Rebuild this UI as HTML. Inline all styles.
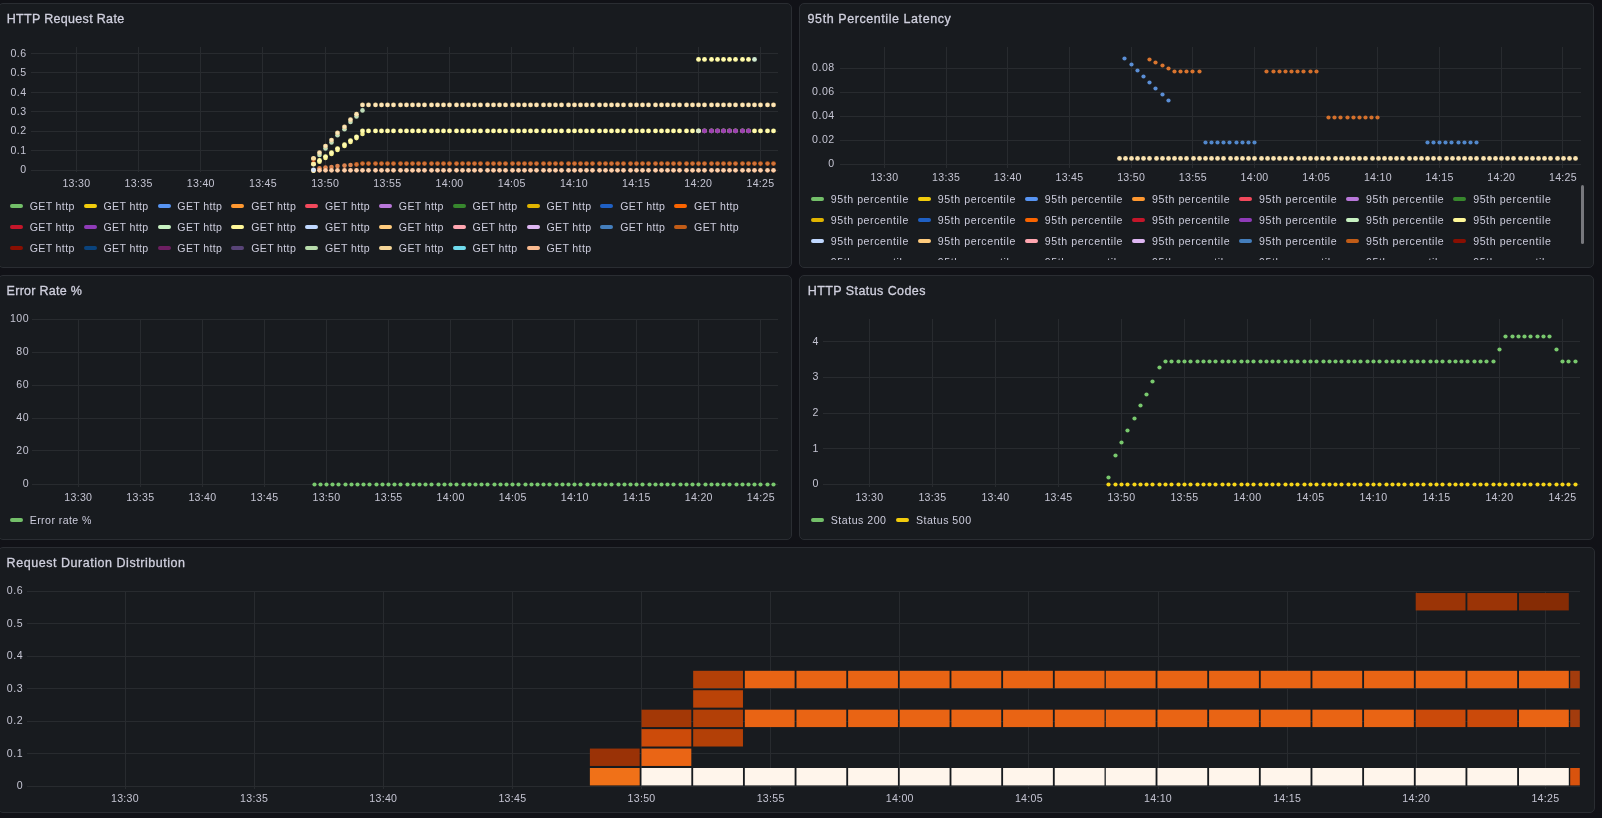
<!DOCTYPE html>
<html lang="en"><head><meta charset="utf-8"><title>Dashboard</title>
<style>
html,body{margin:0;padding:0;background:#111217;}
body{width:1602px;height:818px;overflow:hidden;position:relative;font-family:"Liberation Sans",sans-serif;color:#ccccdc;}
.panel{position:absolute;box-sizing:border-box;background:#181b1f;border:1px solid #2a2d32;border-radius:5px;}
.title{position:absolute;font-size:12.5px;line-height:20px;font-weight:400;color:#d0d0de;white-space:nowrap;letter-spacing:0;-webkit-text-stroke:0.3px #d0d0de;}
svg{position:absolute;left:0;top:0;}
#root{position:absolute;left:0;top:0;width:1602px;height:818px;will-change:transform;}
.ax{font-family:"Liberation Sans",sans-serif;font-size:10.6px;fill:#c4c4d2;letter-spacing:0.3px;}
.ay{letter-spacing:0.5px;}
.lg{position:absolute;font-size:10.6px;line-height:16px;white-space:nowrap;color:#ccccdc;}
.lg i{position:absolute;left:-19.8px;top:6.4px;width:13px;height:3.8px;border-radius:1.9px;display:block;}
.clip{position:absolute;overflow:hidden;}
</style></head><body>
<div id="root">

<div class="panel" style="left:-2px;top:3px;width:794px;height:265px"></div>
<div class="panel" style="left:799px;top:3px;width:795px;height:265px"></div>
<div class="panel" style="left:-2px;top:275px;width:794px;height:265px"></div>
<div class="panel" style="left:799px;top:275px;width:795px;height:265px"></div>
<div class="panel" style="left:-2px;top:547px;width:1597px;height:266px"></div>
<svg width="1602" height="818" viewBox="0 0 1602 818">
<path d="M76.5 47V172M138.5 47V172M200.5 47V172M262.5 47V172M325.5 47V172M387.5 47V172M449.5 47V172M511.5 47V172M573.5 47V172M636.5 47V172M698.5 47V172M760.5 47V172M31 53.5H777.5M31 72.5H777.5M31 92.5H777.5M31 111.5H777.5M31 131.5H777.5M31 150.5H777.5M31 170.5H777.5" stroke="#f0faff" stroke-opacity="0.075" stroke-width="1" fill="none" shape-rendering="crispEdges"/>
<text class="ax ay" x="26.7" y="173.3" text-anchor="end">0</text>
<text class="ax ay" x="26.7" y="153.85" text-anchor="end">0.1</text>
<text class="ax ay" x="26.7" y="134.4" text-anchor="end">0.2</text>
<text class="ax ay" x="26.7" y="114.95" text-anchor="end">0.3</text>
<text class="ax ay" x="26.7" y="95.5" text-anchor="end">0.4</text>
<text class="ax ay" x="26.7" y="76.05" text-anchor="end">0.5</text>
<text class="ax ay" x="26.7" y="56.6" text-anchor="end">0.6</text>
<text class="ax" x="76.4" y="187" text-anchor="middle">13:30</text>
<text class="ax" x="138.59" y="187" text-anchor="middle">13:35</text>
<text class="ax" x="200.78" y="187" text-anchor="middle">13:40</text>
<text class="ax" x="262.97" y="187" text-anchor="middle">13:45</text>
<text class="ax" x="325.16" y="187" text-anchor="middle">13:50</text>
<text class="ax" x="387.35" y="187" text-anchor="middle">13:55</text>
<text class="ax" x="449.54" y="187" text-anchor="middle">14:00</text>
<text class="ax" x="511.73" y="187" text-anchor="middle">14:05</text>
<text class="ax" x="573.92" y="187" text-anchor="middle">14:10</text>
<text class="ax" x="636.11" y="187" text-anchor="middle">14:15</text>
<text class="ax" x="698.3" y="187" text-anchor="middle">14:20</text>
<text class="ax" x="760.49" y="187" text-anchor="middle">14:25</text>
<g fill="#dd8450">
<circle cx="319.5" cy="168.3" r="2.3"/><circle cx="325.5" cy="167.6" r="2.3"/><circle cx="331.5" cy="167" r="2.3"/><circle cx="337.5" cy="166.1" r="2.3"/><circle cx="344.5" cy="165.6" r="2.3"/><circle cx="350.5" cy="165" r="2.3"/>
</g>
<g fill="#C15C17">
<circle cx="356.5" cy="164.5" r="2.4"/><circle cx="362.5" cy="163.6" r="2.4"/><circle cx="368.5" cy="163.6" r="2.4"/><circle cx="375.5" cy="163.6" r="2.4"/><circle cx="381.5" cy="163.6" r="2.4"/><circle cx="387.5" cy="163.6" r="2.4"/><circle cx="393.5" cy="163.6" r="2.4"/><circle cx="400.5" cy="163.6" r="2.4"/><circle cx="406.5" cy="163.6" r="2.4"/><circle cx="412.5" cy="163.6" r="2.4"/><circle cx="418.5" cy="163.6" r="2.4"/><circle cx="424.5" cy="163.6" r="2.4"/><circle cx="431.5" cy="163.6" r="2.4"/><circle cx="437.5" cy="163.6" r="2.4"/><circle cx="443.5" cy="163.6" r="2.4"/><circle cx="449.5" cy="163.6" r="2.4"/><circle cx="456.5" cy="163.6" r="2.4"/><circle cx="462.5" cy="163.6" r="2.4"/><circle cx="468.5" cy="163.6" r="2.4"/><circle cx="474.5" cy="163.6" r="2.4"/><circle cx="480.5" cy="163.6" r="2.4"/><circle cx="487.5" cy="163.6" r="2.4"/><circle cx="493.5" cy="163.6" r="2.4"/><circle cx="499.5" cy="163.6" r="2.4"/><circle cx="505.5" cy="163.6" r="2.4"/><circle cx="512.5" cy="163.6" r="2.4"/><circle cx="518.5" cy="163.6" r="2.4"/><circle cx="524.5" cy="163.6" r="2.4"/><circle cx="530.5" cy="163.6" r="2.4"/><circle cx="536.5" cy="163.6" r="2.4"/><circle cx="543.5" cy="163.6" r="2.4"/><circle cx="549.5" cy="163.6" r="2.4"/><circle cx="555.5" cy="163.6" r="2.4"/><circle cx="561.5" cy="163.6" r="2.4"/><circle cx="568.5" cy="163.6" r="2.4"/><circle cx="574.5" cy="163.6" r="2.4"/><circle cx="580.5" cy="163.6" r="2.4"/><circle cx="586.5" cy="163.6" r="2.4"/><circle cx="592.5" cy="163.6" r="2.4"/><circle cx="599.5" cy="163.6" r="2.4"/><circle cx="605.5" cy="163.6" r="2.4"/><circle cx="611.5" cy="163.6" r="2.4"/><circle cx="617.5" cy="163.6" r="2.4"/><circle cx="623.5" cy="163.6" r="2.4"/><circle cx="630.5" cy="163.6" r="2.4"/><circle cx="636.5" cy="163.6" r="2.4"/><circle cx="642.5" cy="163.6" r="2.4"/><circle cx="648.5" cy="163.6" r="2.4"/><circle cx="655.5" cy="163.6" r="2.4"/><circle cx="661.5" cy="163.6" r="2.4"/><circle cx="667.5" cy="163.6" r="2.4"/><circle cx="673.5" cy="163.6" r="2.4"/><circle cx="679.5" cy="163.6" r="2.4"/><circle cx="686.5" cy="163.6" r="2.4"/><circle cx="692.5" cy="163.6" r="2.4"/><circle cx="698.5" cy="163.6" r="2.4"/><circle cx="704.5" cy="163.6" r="2.4"/><circle cx="711.5" cy="163.6" r="2.4"/><circle cx="717.5" cy="163.6" r="2.4"/><circle cx="723.5" cy="163.6" r="2.4"/><circle cx="729.5" cy="163.6" r="2.4"/><circle cx="735.5" cy="163.6" r="2.4"/><circle cx="742.5" cy="163.6" r="2.4"/><circle cx="748.5" cy="163.6" r="2.4"/><circle cx="754.5" cy="163.6" r="2.4"/><circle cx="760.5" cy="163.6" r="2.4"/><circle cx="767.5" cy="163.6" r="2.4"/><circle cx="773.5" cy="163.6" r="2.4"/>
</g>
<g fill="#cf7440">
<circle cx="356.5" cy="164.5" r="1.7"/><circle cx="362.5" cy="163.6" r="1.7"/><circle cx="368.5" cy="163.6" r="1.7"/><circle cx="375.5" cy="163.6" r="1.7"/><circle cx="381.5" cy="163.6" r="1.7"/><circle cx="387.5" cy="163.6" r="1.7"/><circle cx="393.5" cy="163.6" r="1.7"/><circle cx="400.5" cy="163.6" r="1.7"/><circle cx="406.5" cy="163.6" r="1.7"/><circle cx="412.5" cy="163.6" r="1.7"/><circle cx="418.5" cy="163.6" r="1.7"/><circle cx="424.5" cy="163.6" r="1.7"/><circle cx="431.5" cy="163.6" r="1.7"/><circle cx="437.5" cy="163.6" r="1.7"/><circle cx="443.5" cy="163.6" r="1.7"/><circle cx="449.5" cy="163.6" r="1.7"/><circle cx="456.5" cy="163.6" r="1.7"/><circle cx="462.5" cy="163.6" r="1.7"/><circle cx="468.5" cy="163.6" r="1.7"/><circle cx="474.5" cy="163.6" r="1.7"/><circle cx="480.5" cy="163.6" r="1.7"/><circle cx="487.5" cy="163.6" r="1.7"/><circle cx="493.5" cy="163.6" r="1.7"/><circle cx="499.5" cy="163.6" r="1.7"/><circle cx="505.5" cy="163.6" r="1.7"/><circle cx="512.5" cy="163.6" r="1.7"/><circle cx="518.5" cy="163.6" r="1.7"/><circle cx="524.5" cy="163.6" r="1.7"/><circle cx="530.5" cy="163.6" r="1.7"/><circle cx="536.5" cy="163.6" r="1.7"/><circle cx="543.5" cy="163.6" r="1.7"/><circle cx="549.5" cy="163.6" r="1.7"/><circle cx="555.5" cy="163.6" r="1.7"/><circle cx="561.5" cy="163.6" r="1.7"/><circle cx="568.5" cy="163.6" r="1.7"/><circle cx="574.5" cy="163.6" r="1.7"/><circle cx="580.5" cy="163.6" r="1.7"/><circle cx="586.5" cy="163.6" r="1.7"/><circle cx="592.5" cy="163.6" r="1.7"/><circle cx="599.5" cy="163.6" r="1.7"/><circle cx="605.5" cy="163.6" r="1.7"/><circle cx="611.5" cy="163.6" r="1.7"/><circle cx="617.5" cy="163.6" r="1.7"/><circle cx="623.5" cy="163.6" r="1.7"/><circle cx="630.5" cy="163.6" r="1.7"/><circle cx="636.5" cy="163.6" r="1.7"/><circle cx="642.5" cy="163.6" r="1.7"/><circle cx="648.5" cy="163.6" r="1.7"/><circle cx="655.5" cy="163.6" r="1.7"/><circle cx="661.5" cy="163.6" r="1.7"/><circle cx="667.5" cy="163.6" r="1.7"/><circle cx="673.5" cy="163.6" r="1.7"/><circle cx="679.5" cy="163.6" r="1.7"/><circle cx="686.5" cy="163.6" r="1.7"/><circle cx="692.5" cy="163.6" r="1.7"/><circle cx="698.5" cy="163.6" r="1.7"/><circle cx="704.5" cy="163.6" r="1.7"/><circle cx="711.5" cy="163.6" r="1.7"/><circle cx="717.5" cy="163.6" r="1.7"/><circle cx="723.5" cy="163.6" r="1.7"/><circle cx="729.5" cy="163.6" r="1.7"/><circle cx="735.5" cy="163.6" r="1.7"/><circle cx="742.5" cy="163.6" r="1.7"/><circle cx="748.5" cy="163.6" r="1.7"/><circle cx="754.5" cy="163.6" r="1.7"/><circle cx="760.5" cy="163.6" r="1.7"/><circle cx="767.5" cy="163.6" r="1.7"/><circle cx="773.5" cy="163.6" r="1.7"/>
</g>
<g fill="#bfdcb8">
<circle cx="319.5" cy="155" r="2.3"/><circle cx="325.5" cy="148.4" r="2.3"/><circle cx="331.5" cy="142.4" r="2.3"/><circle cx="337.5" cy="135.2" r="2.3"/><circle cx="344.5" cy="129.2" r="2.3"/><circle cx="350.5" cy="122" r="2.3"/><circle cx="356.5" cy="116.5" r="2.3"/><circle cx="362.5" cy="110.4" r="2.3"/>
</g>
<g fill="#F4D598">
<circle cx="313.5" cy="158.8" r="2.4"/><circle cx="319.5" cy="152.7" r="2.4"/><circle cx="325.5" cy="146.1" r="2.4"/><circle cx="331.5" cy="140.1" r="2.4"/><circle cx="337.5" cy="132.9" r="2.4"/><circle cx="344.5" cy="126.9" r="2.4"/><circle cx="350.5" cy="119.7" r="2.4"/><circle cx="356.5" cy="114.2" r="2.4"/><circle cx="362.5" cy="104.9" r="2.4"/><circle cx="368.5" cy="104.9" r="2.4"/><circle cx="375.5" cy="104.9" r="2.4"/><circle cx="381.5" cy="104.9" r="2.4"/><circle cx="387.5" cy="104.9" r="2.4"/><circle cx="393.5" cy="104.9" r="2.4"/><circle cx="400.5" cy="104.9" r="2.4"/><circle cx="406.5" cy="104.9" r="2.4"/><circle cx="412.5" cy="104.9" r="2.4"/><circle cx="418.5" cy="104.9" r="2.4"/><circle cx="424.5" cy="104.9" r="2.4"/><circle cx="431.5" cy="104.9" r="2.4"/><circle cx="437.5" cy="104.9" r="2.4"/><circle cx="443.5" cy="104.9" r="2.4"/><circle cx="449.5" cy="104.9" r="2.4"/><circle cx="456.5" cy="104.9" r="2.4"/><circle cx="462.5" cy="104.9" r="2.4"/><circle cx="468.5" cy="104.9" r="2.4"/><circle cx="474.5" cy="104.9" r="2.4"/><circle cx="480.5" cy="104.9" r="2.4"/><circle cx="487.5" cy="104.9" r="2.4"/><circle cx="493.5" cy="104.9" r="2.4"/><circle cx="499.5" cy="104.9" r="2.4"/><circle cx="505.5" cy="104.9" r="2.4"/><circle cx="512.5" cy="104.9" r="2.4"/><circle cx="518.5" cy="104.9" r="2.4"/><circle cx="524.5" cy="104.9" r="2.4"/><circle cx="530.5" cy="104.9" r="2.4"/><circle cx="536.5" cy="104.9" r="2.4"/><circle cx="543.5" cy="104.9" r="2.4"/><circle cx="549.5" cy="104.9" r="2.4"/><circle cx="555.5" cy="104.9" r="2.4"/><circle cx="561.5" cy="104.9" r="2.4"/><circle cx="568.5" cy="104.9" r="2.4"/><circle cx="574.5" cy="104.9" r="2.4"/><circle cx="580.5" cy="104.9" r="2.4"/><circle cx="586.5" cy="104.9" r="2.4"/><circle cx="592.5" cy="104.9" r="2.4"/><circle cx="599.5" cy="104.9" r="2.4"/><circle cx="605.5" cy="104.9" r="2.4"/><circle cx="611.5" cy="104.9" r="2.4"/><circle cx="617.5" cy="104.9" r="2.4"/><circle cx="623.5" cy="104.9" r="2.4"/><circle cx="630.5" cy="104.9" r="2.4"/><circle cx="636.5" cy="104.9" r="2.4"/><circle cx="642.5" cy="104.9" r="2.4"/><circle cx="648.5" cy="104.9" r="2.4"/><circle cx="655.5" cy="104.9" r="2.4"/><circle cx="661.5" cy="104.9" r="2.4"/><circle cx="667.5" cy="104.9" r="2.4"/><circle cx="673.5" cy="104.9" r="2.4"/><circle cx="679.5" cy="104.9" r="2.4"/><circle cx="686.5" cy="104.9" r="2.4"/><circle cx="692.5" cy="104.9" r="2.4"/><circle cx="698.5" cy="104.9" r="2.4"/><circle cx="704.5" cy="104.9" r="2.4"/><circle cx="711.5" cy="104.9" r="2.4"/><circle cx="717.5" cy="104.9" r="2.4"/><circle cx="723.5" cy="104.9" r="2.4"/><circle cx="729.5" cy="104.9" r="2.4"/><circle cx="735.5" cy="104.9" r="2.4"/><circle cx="742.5" cy="104.9" r="2.4"/><circle cx="748.5" cy="104.9" r="2.4"/><circle cx="754.5" cy="104.9" r="2.4"/><circle cx="760.5" cy="104.9" r="2.4"/><circle cx="767.5" cy="104.9" r="2.4"/><circle cx="773.5" cy="104.9" r="2.4"/>
</g>
<g fill="#fbe6bc">
<circle cx="313.5" cy="158.8" r="1.7"/><circle cx="319.5" cy="152.7" r="1.7"/><circle cx="325.5" cy="146.1" r="1.7"/><circle cx="331.5" cy="140.1" r="1.7"/><circle cx="337.5" cy="132.9" r="1.7"/><circle cx="344.5" cy="126.9" r="1.7"/><circle cx="350.5" cy="119.7" r="1.7"/><circle cx="356.5" cy="114.2" r="1.7"/><circle cx="362.5" cy="104.9" r="1.7"/><circle cx="368.5" cy="104.9" r="1.7"/><circle cx="375.5" cy="104.9" r="1.7"/><circle cx="381.5" cy="104.9" r="1.7"/><circle cx="387.5" cy="104.9" r="1.7"/><circle cx="393.5" cy="104.9" r="1.7"/><circle cx="400.5" cy="104.9" r="1.7"/><circle cx="406.5" cy="104.9" r="1.7"/><circle cx="412.5" cy="104.9" r="1.7"/><circle cx="418.5" cy="104.9" r="1.7"/><circle cx="424.5" cy="104.9" r="1.7"/><circle cx="431.5" cy="104.9" r="1.7"/><circle cx="437.5" cy="104.9" r="1.7"/><circle cx="443.5" cy="104.9" r="1.7"/><circle cx="449.5" cy="104.9" r="1.7"/><circle cx="456.5" cy="104.9" r="1.7"/><circle cx="462.5" cy="104.9" r="1.7"/><circle cx="468.5" cy="104.9" r="1.7"/><circle cx="474.5" cy="104.9" r="1.7"/><circle cx="480.5" cy="104.9" r="1.7"/><circle cx="487.5" cy="104.9" r="1.7"/><circle cx="493.5" cy="104.9" r="1.7"/><circle cx="499.5" cy="104.9" r="1.7"/><circle cx="505.5" cy="104.9" r="1.7"/><circle cx="512.5" cy="104.9" r="1.7"/><circle cx="518.5" cy="104.9" r="1.7"/><circle cx="524.5" cy="104.9" r="1.7"/><circle cx="530.5" cy="104.9" r="1.7"/><circle cx="536.5" cy="104.9" r="1.7"/><circle cx="543.5" cy="104.9" r="1.7"/><circle cx="549.5" cy="104.9" r="1.7"/><circle cx="555.5" cy="104.9" r="1.7"/><circle cx="561.5" cy="104.9" r="1.7"/><circle cx="568.5" cy="104.9" r="1.7"/><circle cx="574.5" cy="104.9" r="1.7"/><circle cx="580.5" cy="104.9" r="1.7"/><circle cx="586.5" cy="104.9" r="1.7"/><circle cx="592.5" cy="104.9" r="1.7"/><circle cx="599.5" cy="104.9" r="1.7"/><circle cx="605.5" cy="104.9" r="1.7"/><circle cx="611.5" cy="104.9" r="1.7"/><circle cx="617.5" cy="104.9" r="1.7"/><circle cx="623.5" cy="104.9" r="1.7"/><circle cx="630.5" cy="104.9" r="1.7"/><circle cx="636.5" cy="104.9" r="1.7"/><circle cx="642.5" cy="104.9" r="1.7"/><circle cx="648.5" cy="104.9" r="1.7"/><circle cx="655.5" cy="104.9" r="1.7"/><circle cx="661.5" cy="104.9" r="1.7"/><circle cx="667.5" cy="104.9" r="1.7"/><circle cx="673.5" cy="104.9" r="1.7"/><circle cx="679.5" cy="104.9" r="1.7"/><circle cx="686.5" cy="104.9" r="1.7"/><circle cx="692.5" cy="104.9" r="1.7"/><circle cx="698.5" cy="104.9" r="1.7"/><circle cx="704.5" cy="104.9" r="1.7"/><circle cx="711.5" cy="104.9" r="1.7"/><circle cx="717.5" cy="104.9" r="1.7"/><circle cx="723.5" cy="104.9" r="1.7"/><circle cx="729.5" cy="104.9" r="1.7"/><circle cx="735.5" cy="104.9" r="1.7"/><circle cx="742.5" cy="104.9" r="1.7"/><circle cx="748.5" cy="104.9" r="1.7"/><circle cx="754.5" cy="104.9" r="1.7"/><circle cx="760.5" cy="104.9" r="1.7"/><circle cx="767.5" cy="104.9" r="1.7"/><circle cx="773.5" cy="104.9" r="1.7"/>
</g>
<g fill="#f4ee92">
<circle cx="319.5" cy="161.7" r="2.3"/><circle cx="325.5" cy="157.9" r="2.3"/><circle cx="331.5" cy="154" r="2.3"/><circle cx="337.5" cy="149.9" r="2.3"/><circle cx="344.5" cy="146" r="2.3"/><circle cx="350.5" cy="141.9" r="2.3"/><circle cx="356.5" cy="138.1" r="2.3"/><circle cx="362.5" cy="134" r="2.3"/>
</g>
<g fill="#FFF899">
<circle cx="313.5" cy="163.9" r="2.4"/><circle cx="319.5" cy="160.4" r="2.4"/><circle cx="325.5" cy="156.6" r="2.4"/><circle cx="331.5" cy="152.7" r="2.4"/><circle cx="337.5" cy="148.6" r="2.4"/><circle cx="344.5" cy="144.7" r="2.4"/><circle cx="350.5" cy="140.6" r="2.4"/><circle cx="356.5" cy="136.8" r="2.4"/><circle cx="362.5" cy="130.9" r="2.4"/><circle cx="368.5" cy="130.9" r="2.4"/><circle cx="375.5" cy="130.9" r="2.4"/><circle cx="381.5" cy="130.9" r="2.4"/><circle cx="387.5" cy="130.9" r="2.4"/><circle cx="393.5" cy="130.9" r="2.4"/><circle cx="400.5" cy="130.9" r="2.4"/><circle cx="406.5" cy="130.9" r="2.4"/><circle cx="412.5" cy="130.9" r="2.4"/><circle cx="418.5" cy="130.9" r="2.4"/><circle cx="424.5" cy="130.9" r="2.4"/><circle cx="431.5" cy="130.9" r="2.4"/><circle cx="437.5" cy="130.9" r="2.4"/><circle cx="443.5" cy="130.9" r="2.4"/><circle cx="449.5" cy="130.9" r="2.4"/><circle cx="456.5" cy="130.9" r="2.4"/><circle cx="462.5" cy="130.9" r="2.4"/><circle cx="468.5" cy="130.9" r="2.4"/><circle cx="474.5" cy="130.9" r="2.4"/><circle cx="480.5" cy="130.9" r="2.4"/><circle cx="487.5" cy="130.9" r="2.4"/><circle cx="493.5" cy="130.9" r="2.4"/><circle cx="499.5" cy="130.9" r="2.4"/><circle cx="505.5" cy="130.9" r="2.4"/><circle cx="512.5" cy="130.9" r="2.4"/><circle cx="518.5" cy="130.9" r="2.4"/><circle cx="524.5" cy="130.9" r="2.4"/><circle cx="530.5" cy="130.9" r="2.4"/><circle cx="536.5" cy="130.9" r="2.4"/><circle cx="543.5" cy="130.9" r="2.4"/><circle cx="549.5" cy="130.9" r="2.4"/><circle cx="555.5" cy="130.9" r="2.4"/><circle cx="561.5" cy="130.9" r="2.4"/><circle cx="568.5" cy="130.9" r="2.4"/><circle cx="574.5" cy="130.9" r="2.4"/><circle cx="580.5" cy="130.9" r="2.4"/><circle cx="586.5" cy="130.9" r="2.4"/><circle cx="592.5" cy="130.9" r="2.4"/><circle cx="599.5" cy="130.9" r="2.4"/><circle cx="605.5" cy="130.9" r="2.4"/><circle cx="611.5" cy="130.9" r="2.4"/><circle cx="617.5" cy="130.9" r="2.4"/><circle cx="623.5" cy="130.9" r="2.4"/><circle cx="630.5" cy="130.9" r="2.4"/><circle cx="636.5" cy="130.9" r="2.4"/><circle cx="642.5" cy="130.9" r="2.4"/><circle cx="648.5" cy="130.9" r="2.4"/><circle cx="655.5" cy="130.9" r="2.4"/><circle cx="661.5" cy="130.9" r="2.4"/><circle cx="667.5" cy="130.9" r="2.4"/><circle cx="673.5" cy="130.9" r="2.4"/><circle cx="679.5" cy="130.9" r="2.4"/><circle cx="686.5" cy="130.9" r="2.4"/><circle cx="692.5" cy="130.9" r="2.4"/><circle cx="698.5" cy="130.9" r="2.4"/><circle cx="704.5" cy="130.9" r="2.4"/><circle cx="711.5" cy="130.9" r="2.4"/><circle cx="717.5" cy="130.9" r="2.4"/><circle cx="723.5" cy="130.9" r="2.4"/><circle cx="729.5" cy="130.9" r="2.4"/><circle cx="735.5" cy="130.9" r="2.4"/><circle cx="742.5" cy="130.9" r="2.4"/><circle cx="748.5" cy="130.9" r="2.4"/><circle cx="754.5" cy="130.9" r="2.4"/><circle cx="760.5" cy="130.9" r="2.4"/><circle cx="767.5" cy="130.9" r="2.4"/><circle cx="773.5" cy="130.9" r="2.4"/>
</g>
<g fill="#fffbb4">
<circle cx="313.5" cy="163.9" r="1.7"/><circle cx="319.5" cy="160.4" r="1.7"/><circle cx="325.5" cy="156.6" r="1.7"/><circle cx="331.5" cy="152.7" r="1.7"/><circle cx="337.5" cy="148.6" r="1.7"/><circle cx="344.5" cy="144.7" r="1.7"/><circle cx="350.5" cy="140.6" r="1.7"/><circle cx="356.5" cy="136.8" r="1.7"/><circle cx="362.5" cy="130.9" r="1.7"/><circle cx="368.5" cy="130.9" r="1.7"/><circle cx="375.5" cy="130.9" r="1.7"/><circle cx="381.5" cy="130.9" r="1.7"/><circle cx="387.5" cy="130.9" r="1.7"/><circle cx="393.5" cy="130.9" r="1.7"/><circle cx="400.5" cy="130.9" r="1.7"/><circle cx="406.5" cy="130.9" r="1.7"/><circle cx="412.5" cy="130.9" r="1.7"/><circle cx="418.5" cy="130.9" r="1.7"/><circle cx="424.5" cy="130.9" r="1.7"/><circle cx="431.5" cy="130.9" r="1.7"/><circle cx="437.5" cy="130.9" r="1.7"/><circle cx="443.5" cy="130.9" r="1.7"/><circle cx="449.5" cy="130.9" r="1.7"/><circle cx="456.5" cy="130.9" r="1.7"/><circle cx="462.5" cy="130.9" r="1.7"/><circle cx="468.5" cy="130.9" r="1.7"/><circle cx="474.5" cy="130.9" r="1.7"/><circle cx="480.5" cy="130.9" r="1.7"/><circle cx="487.5" cy="130.9" r="1.7"/><circle cx="493.5" cy="130.9" r="1.7"/><circle cx="499.5" cy="130.9" r="1.7"/><circle cx="505.5" cy="130.9" r="1.7"/><circle cx="512.5" cy="130.9" r="1.7"/><circle cx="518.5" cy="130.9" r="1.7"/><circle cx="524.5" cy="130.9" r="1.7"/><circle cx="530.5" cy="130.9" r="1.7"/><circle cx="536.5" cy="130.9" r="1.7"/><circle cx="543.5" cy="130.9" r="1.7"/><circle cx="549.5" cy="130.9" r="1.7"/><circle cx="555.5" cy="130.9" r="1.7"/><circle cx="561.5" cy="130.9" r="1.7"/><circle cx="568.5" cy="130.9" r="1.7"/><circle cx="574.5" cy="130.9" r="1.7"/><circle cx="580.5" cy="130.9" r="1.7"/><circle cx="586.5" cy="130.9" r="1.7"/><circle cx="592.5" cy="130.9" r="1.7"/><circle cx="599.5" cy="130.9" r="1.7"/><circle cx="605.5" cy="130.9" r="1.7"/><circle cx="611.5" cy="130.9" r="1.7"/><circle cx="617.5" cy="130.9" r="1.7"/><circle cx="623.5" cy="130.9" r="1.7"/><circle cx="630.5" cy="130.9" r="1.7"/><circle cx="636.5" cy="130.9" r="1.7"/><circle cx="642.5" cy="130.9" r="1.7"/><circle cx="648.5" cy="130.9" r="1.7"/><circle cx="655.5" cy="130.9" r="1.7"/><circle cx="661.5" cy="130.9" r="1.7"/><circle cx="667.5" cy="130.9" r="1.7"/><circle cx="673.5" cy="130.9" r="1.7"/><circle cx="679.5" cy="130.9" r="1.7"/><circle cx="686.5" cy="130.9" r="1.7"/><circle cx="692.5" cy="130.9" r="1.7"/><circle cx="698.5" cy="130.9" r="1.7"/><circle cx="704.5" cy="130.9" r="1.7"/><circle cx="711.5" cy="130.9" r="1.7"/><circle cx="717.5" cy="130.9" r="1.7"/><circle cx="723.5" cy="130.9" r="1.7"/><circle cx="729.5" cy="130.9" r="1.7"/><circle cx="735.5" cy="130.9" r="1.7"/><circle cx="742.5" cy="130.9" r="1.7"/><circle cx="748.5" cy="130.9" r="1.7"/><circle cx="754.5" cy="130.9" r="1.7"/><circle cx="760.5" cy="130.9" r="1.7"/><circle cx="767.5" cy="130.9" r="1.7"/><circle cx="773.5" cy="130.9" r="1.7"/>
</g>
<g fill="#8F3BB8">
<circle cx="704.5" cy="130.9" r="2.4"/><circle cx="711.5" cy="130.9" r="2.4"/><circle cx="717.5" cy="130.9" r="2.4"/><circle cx="723.5" cy="130.9" r="2.4"/><circle cx="729.5" cy="130.9" r="2.4"/><circle cx="735.5" cy="130.9" r="2.4"/><circle cx="742.5" cy="130.9" r="2.4"/><circle cx="748.5" cy="130.9" r="2.4"/>
</g>
<g fill="#a040b0">
<circle cx="704.5" cy="130.9" r="1.7"/><circle cx="711.5" cy="130.9" r="1.7"/><circle cx="717.5" cy="130.9" r="1.7"/><circle cx="723.5" cy="130.9" r="1.7"/><circle cx="729.5" cy="130.9" r="1.7"/><circle cx="735.5" cy="130.9" r="1.7"/><circle cx="742.5" cy="130.9" r="1.7"/><circle cx="748.5" cy="130.9" r="1.7"/>
</g>
<g fill="#d8e8c8">
<circle cx="698.5" cy="130.9" r="2.4"/>
</g>
<g fill="#F9BA8F">
<circle cx="313.5" cy="170.3" r="2.4"/><circle cx="319.5" cy="170.3" r="2.4"/><circle cx="325.5" cy="170.3" r="2.4"/><circle cx="331.5" cy="170.3" r="2.4"/><circle cx="337.5" cy="170.3" r="2.4"/><circle cx="344.5" cy="170.3" r="2.4"/><circle cx="350.5" cy="170.3" r="2.4"/><circle cx="356.5" cy="170.3" r="2.4"/><circle cx="362.5" cy="170.3" r="2.4"/><circle cx="368.5" cy="170.3" r="2.4"/><circle cx="375.5" cy="170.3" r="2.4"/><circle cx="381.5" cy="170.3" r="2.4"/><circle cx="387.5" cy="170.3" r="2.4"/><circle cx="393.5" cy="170.3" r="2.4"/><circle cx="400.5" cy="170.3" r="2.4"/><circle cx="406.5" cy="170.3" r="2.4"/><circle cx="412.5" cy="170.3" r="2.4"/><circle cx="418.5" cy="170.3" r="2.4"/><circle cx="424.5" cy="170.3" r="2.4"/><circle cx="431.5" cy="170.3" r="2.4"/><circle cx="437.5" cy="170.3" r="2.4"/><circle cx="443.5" cy="170.3" r="2.4"/><circle cx="449.5" cy="170.3" r="2.4"/><circle cx="456.5" cy="170.3" r="2.4"/><circle cx="462.5" cy="170.3" r="2.4"/><circle cx="468.5" cy="170.3" r="2.4"/><circle cx="474.5" cy="170.3" r="2.4"/><circle cx="480.5" cy="170.3" r="2.4"/><circle cx="487.5" cy="170.3" r="2.4"/><circle cx="493.5" cy="170.3" r="2.4"/><circle cx="499.5" cy="170.3" r="2.4"/><circle cx="505.5" cy="170.3" r="2.4"/><circle cx="512.5" cy="170.3" r="2.4"/><circle cx="518.5" cy="170.3" r="2.4"/><circle cx="524.5" cy="170.3" r="2.4"/><circle cx="530.5" cy="170.3" r="2.4"/><circle cx="536.5" cy="170.3" r="2.4"/><circle cx="543.5" cy="170.3" r="2.4"/><circle cx="549.5" cy="170.3" r="2.4"/><circle cx="555.5" cy="170.3" r="2.4"/><circle cx="561.5" cy="170.3" r="2.4"/><circle cx="568.5" cy="170.3" r="2.4"/><circle cx="574.5" cy="170.3" r="2.4"/><circle cx="580.5" cy="170.3" r="2.4"/><circle cx="586.5" cy="170.3" r="2.4"/><circle cx="592.5" cy="170.3" r="2.4"/><circle cx="599.5" cy="170.3" r="2.4"/><circle cx="605.5" cy="170.3" r="2.4"/><circle cx="611.5" cy="170.3" r="2.4"/><circle cx="617.5" cy="170.3" r="2.4"/><circle cx="623.5" cy="170.3" r="2.4"/><circle cx="630.5" cy="170.3" r="2.4"/><circle cx="636.5" cy="170.3" r="2.4"/><circle cx="642.5" cy="170.3" r="2.4"/><circle cx="648.5" cy="170.3" r="2.4"/><circle cx="655.5" cy="170.3" r="2.4"/><circle cx="661.5" cy="170.3" r="2.4"/><circle cx="667.5" cy="170.3" r="2.4"/><circle cx="673.5" cy="170.3" r="2.4"/><circle cx="679.5" cy="170.3" r="2.4"/><circle cx="686.5" cy="170.3" r="2.4"/><circle cx="692.5" cy="170.3" r="2.4"/><circle cx="698.5" cy="170.3" r="2.4"/><circle cx="704.5" cy="170.3" r="2.4"/><circle cx="711.5" cy="170.3" r="2.4"/><circle cx="717.5" cy="170.3" r="2.4"/><circle cx="723.5" cy="170.3" r="2.4"/><circle cx="729.5" cy="170.3" r="2.4"/><circle cx="735.5" cy="170.3" r="2.4"/><circle cx="742.5" cy="170.3" r="2.4"/><circle cx="748.5" cy="170.3" r="2.4"/><circle cx="754.5" cy="170.3" r="2.4"/><circle cx="760.5" cy="170.3" r="2.4"/><circle cx="767.5" cy="170.3" r="2.4"/><circle cx="773.5" cy="170.3" r="2.4"/>
</g>
<g fill="#f9d2ae">
<circle cx="313.5" cy="170.3" r="1.7"/><circle cx="319.5" cy="170.3" r="1.7"/><circle cx="325.5" cy="170.3" r="1.7"/><circle cx="331.5" cy="170.3" r="1.7"/><circle cx="337.5" cy="170.3" r="1.7"/><circle cx="344.5" cy="170.3" r="1.7"/><circle cx="350.5" cy="170.3" r="1.7"/><circle cx="356.5" cy="170.3" r="1.7"/><circle cx="362.5" cy="170.3" r="1.7"/><circle cx="368.5" cy="170.3" r="1.7"/><circle cx="375.5" cy="170.3" r="1.7"/><circle cx="381.5" cy="170.3" r="1.7"/><circle cx="387.5" cy="170.3" r="1.7"/><circle cx="393.5" cy="170.3" r="1.7"/><circle cx="400.5" cy="170.3" r="1.7"/><circle cx="406.5" cy="170.3" r="1.7"/><circle cx="412.5" cy="170.3" r="1.7"/><circle cx="418.5" cy="170.3" r="1.7"/><circle cx="424.5" cy="170.3" r="1.7"/><circle cx="431.5" cy="170.3" r="1.7"/><circle cx="437.5" cy="170.3" r="1.7"/><circle cx="443.5" cy="170.3" r="1.7"/><circle cx="449.5" cy="170.3" r="1.7"/><circle cx="456.5" cy="170.3" r="1.7"/><circle cx="462.5" cy="170.3" r="1.7"/><circle cx="468.5" cy="170.3" r="1.7"/><circle cx="474.5" cy="170.3" r="1.7"/><circle cx="480.5" cy="170.3" r="1.7"/><circle cx="487.5" cy="170.3" r="1.7"/><circle cx="493.5" cy="170.3" r="1.7"/><circle cx="499.5" cy="170.3" r="1.7"/><circle cx="505.5" cy="170.3" r="1.7"/><circle cx="512.5" cy="170.3" r="1.7"/><circle cx="518.5" cy="170.3" r="1.7"/><circle cx="524.5" cy="170.3" r="1.7"/><circle cx="530.5" cy="170.3" r="1.7"/><circle cx="536.5" cy="170.3" r="1.7"/><circle cx="543.5" cy="170.3" r="1.7"/><circle cx="549.5" cy="170.3" r="1.7"/><circle cx="555.5" cy="170.3" r="1.7"/><circle cx="561.5" cy="170.3" r="1.7"/><circle cx="568.5" cy="170.3" r="1.7"/><circle cx="574.5" cy="170.3" r="1.7"/><circle cx="580.5" cy="170.3" r="1.7"/><circle cx="586.5" cy="170.3" r="1.7"/><circle cx="592.5" cy="170.3" r="1.7"/><circle cx="599.5" cy="170.3" r="1.7"/><circle cx="605.5" cy="170.3" r="1.7"/><circle cx="611.5" cy="170.3" r="1.7"/><circle cx="617.5" cy="170.3" r="1.7"/><circle cx="623.5" cy="170.3" r="1.7"/><circle cx="630.5" cy="170.3" r="1.7"/><circle cx="636.5" cy="170.3" r="1.7"/><circle cx="642.5" cy="170.3" r="1.7"/><circle cx="648.5" cy="170.3" r="1.7"/><circle cx="655.5" cy="170.3" r="1.7"/><circle cx="661.5" cy="170.3" r="1.7"/><circle cx="667.5" cy="170.3" r="1.7"/><circle cx="673.5" cy="170.3" r="1.7"/><circle cx="679.5" cy="170.3" r="1.7"/><circle cx="686.5" cy="170.3" r="1.7"/><circle cx="692.5" cy="170.3" r="1.7"/><circle cx="698.5" cy="170.3" r="1.7"/><circle cx="704.5" cy="170.3" r="1.7"/><circle cx="711.5" cy="170.3" r="1.7"/><circle cx="717.5" cy="170.3" r="1.7"/><circle cx="723.5" cy="170.3" r="1.7"/><circle cx="729.5" cy="170.3" r="1.7"/><circle cx="735.5" cy="170.3" r="1.7"/><circle cx="742.5" cy="170.3" r="1.7"/><circle cx="748.5" cy="170.3" r="1.7"/><circle cx="754.5" cy="170.3" r="1.7"/><circle cx="760.5" cy="170.3" r="1.7"/><circle cx="767.5" cy="170.3" r="1.7"/><circle cx="773.5" cy="170.3" r="1.7"/>
</g>
<g fill="#a8401a">
<circle cx="313.5" cy="160.6" r="1.9"/>
</g>
<g fill="#f8dca0">
<circle cx="313.5" cy="158.3" r="2.4"/>
</g>
<g fill="#c0501c">
<circle cx="313.5" cy="162.9" r="1.8"/>
</g>
<g fill="#fdf0a8">
<circle cx="313.5" cy="164.2" r="2.4"/>
</g>
<g fill="#f6e6a0">
<circle cx="313.5" cy="170.9" r="2.2"/>
</g>
<g fill="#d6e4fa">
<circle cx="313.5" cy="169.8" r="2.4"/>
</g>
<g fill="#FFF899">
<circle cx="698.5" cy="59.4" r="2.4"/><circle cx="704.5" cy="59.4" r="2.4"/><circle cx="711.5" cy="59.4" r="2.4"/><circle cx="717.5" cy="59.4" r="2.4"/><circle cx="723.5" cy="59.4" r="2.4"/><circle cx="729.5" cy="59.4" r="2.4"/><circle cx="735.5" cy="59.4" r="2.4"/><circle cx="742.5" cy="59.4" r="2.4"/><circle cx="748.5" cy="59.4" r="2.4"/>
</g>
<g fill="#fffbb4">
<circle cx="698.5" cy="59.4" r="1.7"/><circle cx="704.5" cy="59.4" r="1.7"/><circle cx="711.5" cy="59.4" r="1.7"/><circle cx="717.5" cy="59.4" r="1.7"/><circle cx="723.5" cy="59.4" r="1.7"/><circle cx="729.5" cy="59.4" r="1.7"/><circle cx="735.5" cy="59.4" r="1.7"/><circle cx="742.5" cy="59.4" r="1.7"/><circle cx="748.5" cy="59.4" r="1.7"/>
</g>
<g fill="#cfe9d0">
<circle cx="754.5" cy="59.4" r="2.4"/>
</g>
<path d="M884.5 47V168M946.5 47V168M1007.5 47V168M1069.5 47V168M1131.5 47V168M1192.5 47V168M1254.5 47V168M1316.5 47V168M1377.5 47V168M1439.5 47V168M1501.5 47V168M1562.5 47V168M839.5 68.5H1580.5M839.5 92.5H1580.5M839.5 116.5H1580.5M839.5 140.5H1580.5M839.5 164.5H1580.5" stroke="#f0faff" stroke-opacity="0.075" stroke-width="1" fill="none" shape-rendering="crispEdges"/>
<text class="ax ay" x="834.7" y="167.3" text-anchor="end">0</text>
<text class="ax ay" x="834.7" y="143.3" text-anchor="end">0.02</text>
<text class="ax ay" x="834.7" y="119.3" text-anchor="end">0.04</text>
<text class="ax ay" x="834.7" y="95.3" text-anchor="end">0.06</text>
<text class="ax ay" x="834.7" y="71.3" text-anchor="end">0.08</text>
<text class="ax" x="884.4" y="181.1" text-anchor="middle">13:30</text>
<text class="ax" x="946.09" y="181.1" text-anchor="middle">13:35</text>
<text class="ax" x="1007.78" y="181.1" text-anchor="middle">13:40</text>
<text class="ax" x="1069.47" y="181.1" text-anchor="middle">13:45</text>
<text class="ax" x="1131.16" y="181.1" text-anchor="middle">13:50</text>
<text class="ax" x="1192.85" y="181.1" text-anchor="middle">13:55</text>
<text class="ax" x="1254.54" y="181.1" text-anchor="middle">14:00</text>
<text class="ax" x="1316.23" y="181.1" text-anchor="middle">14:05</text>
<text class="ax" x="1377.92" y="181.1" text-anchor="middle">14:10</text>
<text class="ax" x="1439.61" y="181.1" text-anchor="middle">14:15</text>
<text class="ax" x="1501.3" y="181.1" text-anchor="middle">14:20</text>
<text class="ax" x="1562.99" y="181.1" text-anchor="middle">14:25</text>
<g fill="#5b8fd6">
<circle cx="1124.5" cy="58.5" r="2.1"/><circle cx="1131.5" cy="64.5" r="2.1"/><circle cx="1137.5" cy="70.5" r="2.1"/><circle cx="1143.5" cy="76.5" r="2.1"/><circle cx="1149.5" cy="82.5" r="2.1"/><circle cx="1155.5" cy="88.5" r="2.1"/><circle cx="1162.5" cy="94.5" r="2.1"/><circle cx="1168.5" cy="100.5" r="2.1"/>
</g>
<g fill="#d9752f">
<circle cx="1149.5" cy="59.5" r="2.1"/><circle cx="1155.5" cy="62.5" r="2.1"/><circle cx="1162.5" cy="65.5" r="2.1"/><circle cx="1168.5" cy="68.5" r="2.1"/><circle cx="1174.5" cy="71.5" r="2.1"/><circle cx="1180.5" cy="71.5" r="2.1"/><circle cx="1186.5" cy="71.5" r="2.1"/><circle cx="1192.5" cy="71.5" r="2.1"/><circle cx="1199.5" cy="71.5" r="2.1"/>
</g>
<g fill="#5288cc">
<circle cx="1205.5" cy="142.5" r="2.1"/><circle cx="1211.5" cy="142.5" r="2.1"/><circle cx="1217.5" cy="142.5" r="2.1"/><circle cx="1223.5" cy="142.5" r="2.1"/><circle cx="1229.5" cy="142.5" r="2.1"/><circle cx="1236.5" cy="142.5" r="2.1"/><circle cx="1242.5" cy="142.5" r="2.1"/><circle cx="1248.5" cy="142.5" r="2.1"/><circle cx="1254.5" cy="142.5" r="2.1"/>
</g>
<g fill="#d4702c">
<circle cx="1266.5" cy="71.5" r="2.1"/><circle cx="1273.5" cy="71.5" r="2.1"/><circle cx="1279.5" cy="71.5" r="2.1"/><circle cx="1285.5" cy="71.5" r="2.1"/><circle cx="1291.5" cy="71.5" r="2.1"/><circle cx="1297.5" cy="71.5" r="2.1"/><circle cx="1303.5" cy="71.5" r="2.1"/><circle cx="1310.5" cy="71.5" r="2.1"/><circle cx="1316.5" cy="71.5" r="2.1"/>
</g>
<g fill="#d4702c">
<circle cx="1328.5" cy="117.5" r="2.1"/><circle cx="1334.5" cy="117.5" r="2.1"/><circle cx="1340.5" cy="117.5" r="2.1"/><circle cx="1347.5" cy="117.5" r="2.1"/><circle cx="1353.5" cy="117.5" r="2.1"/><circle cx="1359.5" cy="117.5" r="2.1"/><circle cx="1365.5" cy="117.5" r="2.1"/><circle cx="1371.5" cy="117.5" r="2.1"/><circle cx="1377.5" cy="117.5" r="2.1"/>
</g>
<g fill="#5288cc">
<circle cx="1427.5" cy="142.5" r="2.1"/><circle cx="1433.5" cy="142.5" r="2.1"/><circle cx="1439.5" cy="142.5" r="2.1"/><circle cx="1445.5" cy="142.5" r="2.1"/><circle cx="1451.5" cy="142.5" r="2.1"/><circle cx="1458.5" cy="142.5" r="2.1"/><circle cx="1464.5" cy="142.5" r="2.1"/><circle cx="1470.5" cy="142.5" r="2.1"/><circle cx="1476.5" cy="142.5" r="2.1"/>
</g>
<g fill="#F4D9A0">
<circle cx="1119.5" cy="158.42" r="2.4"/><circle cx="1125.5" cy="158.42" r="2.4"/><circle cx="1131.5" cy="158.42" r="2.4"/><circle cx="1137.5" cy="158.42" r="2.4"/><circle cx="1143.5" cy="158.42" r="2.4"/><circle cx="1149.5" cy="158.42" r="2.4"/><circle cx="1156.5" cy="158.42" r="2.4"/><circle cx="1162.5" cy="158.42" r="2.4"/><circle cx="1168.5" cy="158.42" r="2.4"/><circle cx="1174.5" cy="158.42" r="2.4"/><circle cx="1180.5" cy="158.42" r="2.4"/><circle cx="1186.5" cy="158.42" r="2.4"/><circle cx="1193.5" cy="158.42" r="2.4"/><circle cx="1199.5" cy="158.42" r="2.4"/><circle cx="1205.5" cy="158.42" r="2.4"/><circle cx="1211.5" cy="158.42" r="2.4"/><circle cx="1217.5" cy="158.42" r="2.4"/><circle cx="1223.5" cy="158.42" r="2.4"/><circle cx="1230.5" cy="158.42" r="2.4"/><circle cx="1236.5" cy="158.42" r="2.4"/><circle cx="1242.5" cy="158.42" r="2.4"/><circle cx="1248.5" cy="158.42" r="2.4"/><circle cx="1254.5" cy="158.42" r="2.4"/><circle cx="1261.5" cy="158.42" r="2.4"/><circle cx="1267.5" cy="158.42" r="2.4"/><circle cx="1273.5" cy="158.42" r="2.4"/><circle cx="1279.5" cy="158.42" r="2.4"/><circle cx="1285.5" cy="158.42" r="2.4"/><circle cx="1291.5" cy="158.42" r="2.4"/><circle cx="1298.5" cy="158.42" r="2.4"/><circle cx="1304.5" cy="158.42" r="2.4"/><circle cx="1310.5" cy="158.42" r="2.4"/><circle cx="1316.5" cy="158.42" r="2.4"/><circle cx="1322.5" cy="158.42" r="2.4"/><circle cx="1328.5" cy="158.42" r="2.4"/><circle cx="1335.5" cy="158.42" r="2.4"/><circle cx="1341.5" cy="158.42" r="2.4"/><circle cx="1347.5" cy="158.42" r="2.4"/><circle cx="1353.5" cy="158.42" r="2.4"/><circle cx="1359.5" cy="158.42" r="2.4"/><circle cx="1365.5" cy="158.42" r="2.4"/><circle cx="1372.5" cy="158.42" r="2.4"/><circle cx="1378.5" cy="158.42" r="2.4"/><circle cx="1384.5" cy="158.42" r="2.4"/><circle cx="1390.5" cy="158.42" r="2.4"/><circle cx="1396.5" cy="158.42" r="2.4"/><circle cx="1402.5" cy="158.42" r="2.4"/><circle cx="1409.5" cy="158.42" r="2.4"/><circle cx="1415.5" cy="158.42" r="2.4"/><circle cx="1421.5" cy="158.42" r="2.4"/><circle cx="1427.5" cy="158.42" r="2.4"/><circle cx="1433.5" cy="158.42" r="2.4"/><circle cx="1439.5" cy="158.42" r="2.4"/><circle cx="1446.5" cy="158.42" r="2.4"/><circle cx="1452.5" cy="158.42" r="2.4"/><circle cx="1458.5" cy="158.42" r="2.4"/><circle cx="1464.5" cy="158.42" r="2.4"/><circle cx="1470.5" cy="158.42" r="2.4"/><circle cx="1476.5" cy="158.42" r="2.4"/><circle cx="1483.5" cy="158.42" r="2.4"/><circle cx="1489.5" cy="158.42" r="2.4"/><circle cx="1495.5" cy="158.42" r="2.4"/><circle cx="1501.5" cy="158.42" r="2.4"/><circle cx="1507.5" cy="158.42" r="2.4"/><circle cx="1513.5" cy="158.42" r="2.4"/><circle cx="1520.5" cy="158.42" r="2.4"/><circle cx="1526.5" cy="158.42" r="2.4"/><circle cx="1532.5" cy="158.42" r="2.4"/><circle cx="1538.5" cy="158.42" r="2.4"/><circle cx="1544.5" cy="158.42" r="2.4"/><circle cx="1550.5" cy="158.42" r="2.4"/><circle cx="1557.5" cy="158.42" r="2.4"/><circle cx="1563.5" cy="158.42" r="2.4"/><circle cx="1569.5" cy="158.42" r="2.4"/><circle cx="1575.5" cy="158.42" r="2.4"/>
</g>
<g fill="#f7e3b6">
<circle cx="1119.5" cy="158.42" r="1.7"/><circle cx="1125.5" cy="158.42" r="1.7"/><circle cx="1131.5" cy="158.42" r="1.7"/><circle cx="1137.5" cy="158.42" r="1.7"/><circle cx="1143.5" cy="158.42" r="1.7"/><circle cx="1149.5" cy="158.42" r="1.7"/><circle cx="1156.5" cy="158.42" r="1.7"/><circle cx="1162.5" cy="158.42" r="1.7"/><circle cx="1168.5" cy="158.42" r="1.7"/><circle cx="1174.5" cy="158.42" r="1.7"/><circle cx="1180.5" cy="158.42" r="1.7"/><circle cx="1186.5" cy="158.42" r="1.7"/><circle cx="1193.5" cy="158.42" r="1.7"/><circle cx="1199.5" cy="158.42" r="1.7"/><circle cx="1205.5" cy="158.42" r="1.7"/><circle cx="1211.5" cy="158.42" r="1.7"/><circle cx="1217.5" cy="158.42" r="1.7"/><circle cx="1223.5" cy="158.42" r="1.7"/><circle cx="1230.5" cy="158.42" r="1.7"/><circle cx="1236.5" cy="158.42" r="1.7"/><circle cx="1242.5" cy="158.42" r="1.7"/><circle cx="1248.5" cy="158.42" r="1.7"/><circle cx="1254.5" cy="158.42" r="1.7"/><circle cx="1261.5" cy="158.42" r="1.7"/><circle cx="1267.5" cy="158.42" r="1.7"/><circle cx="1273.5" cy="158.42" r="1.7"/><circle cx="1279.5" cy="158.42" r="1.7"/><circle cx="1285.5" cy="158.42" r="1.7"/><circle cx="1291.5" cy="158.42" r="1.7"/><circle cx="1298.5" cy="158.42" r="1.7"/><circle cx="1304.5" cy="158.42" r="1.7"/><circle cx="1310.5" cy="158.42" r="1.7"/><circle cx="1316.5" cy="158.42" r="1.7"/><circle cx="1322.5" cy="158.42" r="1.7"/><circle cx="1328.5" cy="158.42" r="1.7"/><circle cx="1335.5" cy="158.42" r="1.7"/><circle cx="1341.5" cy="158.42" r="1.7"/><circle cx="1347.5" cy="158.42" r="1.7"/><circle cx="1353.5" cy="158.42" r="1.7"/><circle cx="1359.5" cy="158.42" r="1.7"/><circle cx="1365.5" cy="158.42" r="1.7"/><circle cx="1372.5" cy="158.42" r="1.7"/><circle cx="1378.5" cy="158.42" r="1.7"/><circle cx="1384.5" cy="158.42" r="1.7"/><circle cx="1390.5" cy="158.42" r="1.7"/><circle cx="1396.5" cy="158.42" r="1.7"/><circle cx="1402.5" cy="158.42" r="1.7"/><circle cx="1409.5" cy="158.42" r="1.7"/><circle cx="1415.5" cy="158.42" r="1.7"/><circle cx="1421.5" cy="158.42" r="1.7"/><circle cx="1427.5" cy="158.42" r="1.7"/><circle cx="1433.5" cy="158.42" r="1.7"/><circle cx="1439.5" cy="158.42" r="1.7"/><circle cx="1446.5" cy="158.42" r="1.7"/><circle cx="1452.5" cy="158.42" r="1.7"/><circle cx="1458.5" cy="158.42" r="1.7"/><circle cx="1464.5" cy="158.42" r="1.7"/><circle cx="1470.5" cy="158.42" r="1.7"/><circle cx="1476.5" cy="158.42" r="1.7"/><circle cx="1483.5" cy="158.42" r="1.7"/><circle cx="1489.5" cy="158.42" r="1.7"/><circle cx="1495.5" cy="158.42" r="1.7"/><circle cx="1501.5" cy="158.42" r="1.7"/><circle cx="1507.5" cy="158.42" r="1.7"/><circle cx="1513.5" cy="158.42" r="1.7"/><circle cx="1520.5" cy="158.42" r="1.7"/><circle cx="1526.5" cy="158.42" r="1.7"/><circle cx="1532.5" cy="158.42" r="1.7"/><circle cx="1538.5" cy="158.42" r="1.7"/><circle cx="1544.5" cy="158.42" r="1.7"/><circle cx="1550.5" cy="158.42" r="1.7"/><circle cx="1557.5" cy="158.42" r="1.7"/><circle cx="1563.5" cy="158.42" r="1.7"/><circle cx="1569.5" cy="158.42" r="1.7"/><circle cx="1575.5" cy="158.42" r="1.7"/>
</g>
<path d="M78.5 319V487M140.5 319V487M202.5 319V487M264.5 319V487M326.5 319V487M388.5 319V487M450.5 319V487M512.5 319V487M574.5 319V487M636.5 319V487M698.5 319V487M760.5 319V487M32 319.5H777.5M32 352.5H777.5M32 385.5H777.5M32 418.5H777.5M32 450.5H777.5M32 484.5H777.5" stroke="#f0faff" stroke-opacity="0.075" stroke-width="1" fill="none" shape-rendering="crispEdges"/>
<text class="ax ay" x="29.1" y="487.3" text-anchor="end">0</text>
<text class="ax ay" x="29.1" y="454.3" text-anchor="end">20</text>
<text class="ax ay" x="29.1" y="421.3" text-anchor="end">40</text>
<text class="ax ay" x="29.1" y="388.3" text-anchor="end">60</text>
<text class="ax ay" x="29.1" y="355.3" text-anchor="end">80</text>
<text class="ax ay" x="29.1" y="322.3" text-anchor="end">100</text>
<text class="ax" x="78.3" y="501.3" text-anchor="middle">13:30</text>
<text class="ax" x="140.35" y="501.3" text-anchor="middle">13:35</text>
<text class="ax" x="202.4" y="501.3" text-anchor="middle">13:40</text>
<text class="ax" x="264.45" y="501.3" text-anchor="middle">13:45</text>
<text class="ax" x="326.5" y="501.3" text-anchor="middle">13:50</text>
<text class="ax" x="388.55" y="501.3" text-anchor="middle">13:55</text>
<text class="ax" x="450.6" y="501.3" text-anchor="middle">14:00</text>
<text class="ax" x="512.65" y="501.3" text-anchor="middle">14:05</text>
<text class="ax" x="574.7" y="501.3" text-anchor="middle">14:10</text>
<text class="ax" x="636.75" y="501.3" text-anchor="middle">14:15</text>
<text class="ax" x="698.8" y="501.3" text-anchor="middle">14:20</text>
<text class="ax" x="760.85" y="501.3" text-anchor="middle">14:25</text>
<g fill="#79c96e">
<circle cx="314.5" cy="484.5" r="2.1"/><circle cx="320.5" cy="484.5" r="2.1"/><circle cx="326.5" cy="484.5" r="2.1"/><circle cx="332.5" cy="484.5" r="2.1"/><circle cx="338.5" cy="484.5" r="2.1"/><circle cx="345.5" cy="484.5" r="2.1"/><circle cx="351.5" cy="484.5" r="2.1"/><circle cx="357.5" cy="484.5" r="2.1"/><circle cx="363.5" cy="484.5" r="2.1"/><circle cx="369.5" cy="484.5" r="2.1"/><circle cx="376.5" cy="484.5" r="2.1"/><circle cx="382.5" cy="484.5" r="2.1"/><circle cx="388.5" cy="484.5" r="2.1"/><circle cx="394.5" cy="484.5" r="2.1"/><circle cx="400.5" cy="484.5" r="2.1"/><circle cx="407.5" cy="484.5" r="2.1"/><circle cx="413.5" cy="484.5" r="2.1"/><circle cx="419.5" cy="484.5" r="2.1"/><circle cx="425.5" cy="484.5" r="2.1"/><circle cx="431.5" cy="484.5" r="2.1"/><circle cx="438.5" cy="484.5" r="2.1"/><circle cx="444.5" cy="484.5" r="2.1"/><circle cx="450.5" cy="484.5" r="2.1"/><circle cx="456.5" cy="484.5" r="2.1"/><circle cx="463.5" cy="484.5" r="2.1"/><circle cx="469.5" cy="484.5" r="2.1"/><circle cx="475.5" cy="484.5" r="2.1"/><circle cx="481.5" cy="484.5" r="2.1"/><circle cx="487.5" cy="484.5" r="2.1"/><circle cx="494.5" cy="484.5" r="2.1"/><circle cx="500.5" cy="484.5" r="2.1"/><circle cx="506.5" cy="484.5" r="2.1"/><circle cx="512.5" cy="484.5" r="2.1"/><circle cx="518.5" cy="484.5" r="2.1"/><circle cx="525.5" cy="484.5" r="2.1"/><circle cx="531.5" cy="484.5" r="2.1"/><circle cx="537.5" cy="484.5" r="2.1"/><circle cx="543.5" cy="484.5" r="2.1"/><circle cx="549.5" cy="484.5" r="2.1"/><circle cx="556.5" cy="484.5" r="2.1"/><circle cx="562.5" cy="484.5" r="2.1"/><circle cx="568.5" cy="484.5" r="2.1"/><circle cx="574.5" cy="484.5" r="2.1"/><circle cx="580.5" cy="484.5" r="2.1"/><circle cx="587.5" cy="484.5" r="2.1"/><circle cx="593.5" cy="484.5" r="2.1"/><circle cx="599.5" cy="484.5" r="2.1"/><circle cx="605.5" cy="484.5" r="2.1"/><circle cx="611.5" cy="484.5" r="2.1"/><circle cx="618.5" cy="484.5" r="2.1"/><circle cx="624.5" cy="484.5" r="2.1"/><circle cx="630.5" cy="484.5" r="2.1"/><circle cx="636.5" cy="484.5" r="2.1"/><circle cx="642.5" cy="484.5" r="2.1"/><circle cx="649.5" cy="484.5" r="2.1"/><circle cx="655.5" cy="484.5" r="2.1"/><circle cx="661.5" cy="484.5" r="2.1"/><circle cx="667.5" cy="484.5" r="2.1"/><circle cx="673.5" cy="484.5" r="2.1"/><circle cx="680.5" cy="484.5" r="2.1"/><circle cx="686.5" cy="484.5" r="2.1"/><circle cx="692.5" cy="484.5" r="2.1"/><circle cx="698.5" cy="484.5" r="2.1"/><circle cx="705.5" cy="484.5" r="2.1"/><circle cx="711.5" cy="484.5" r="2.1"/><circle cx="717.5" cy="484.5" r="2.1"/><circle cx="723.5" cy="484.5" r="2.1"/><circle cx="729.5" cy="484.5" r="2.1"/><circle cx="736.5" cy="484.5" r="2.1"/><circle cx="742.5" cy="484.5" r="2.1"/><circle cx="748.5" cy="484.5" r="2.1"/><circle cx="754.5" cy="484.5" r="2.1"/><circle cx="760.5" cy="484.5" r="2.1"/><circle cx="767.5" cy="484.5" r="2.1"/><circle cx="773.5" cy="484.5" r="2.1"/>
</g>
<path d="M869.5 319V487M932.5 319V487M995.5 319V487M1058.5 319V487M1121.5 319V487M1184.5 319V487M1247.5 319V487M1310.5 319V487M1373.5 319V487M1436.5 319V487M1499.5 319V487M1562.5 319V487M823 341.5H1580M823 377.5H1580M823 413.5H1580M823 448.5H1580M823 484.5H1580" stroke="#f0faff" stroke-opacity="0.075" stroke-width="1" fill="none" shape-rendering="crispEdges"/>
<text class="ax ay" x="818.9" y="487.4" text-anchor="end">0</text>
<text class="ax ay" x="818.9" y="451.7" text-anchor="end">1</text>
<text class="ax ay" x="818.9" y="416" text-anchor="end">2</text>
<text class="ax ay" x="818.9" y="380.3" text-anchor="end">3</text>
<text class="ax ay" x="818.9" y="344.6" text-anchor="end">4</text>
<text class="ax" x="869.4" y="501.3" text-anchor="middle">13:30</text>
<text class="ax" x="932.4" y="501.3" text-anchor="middle">13:35</text>
<text class="ax" x="995.4" y="501.3" text-anchor="middle">13:40</text>
<text class="ax" x="1058.4" y="501.3" text-anchor="middle">13:45</text>
<text class="ax" x="1121.4" y="501.3" text-anchor="middle">13:50</text>
<text class="ax" x="1184.4" y="501.3" text-anchor="middle">13:55</text>
<text class="ax" x="1247.4" y="501.3" text-anchor="middle">14:00</text>
<text class="ax" x="1310.4" y="501.3" text-anchor="middle">14:05</text>
<text class="ax" x="1373.4" y="501.3" text-anchor="middle">14:10</text>
<text class="ax" x="1436.4" y="501.3" text-anchor="middle">14:15</text>
<text class="ax" x="1499.4" y="501.3" text-anchor="middle">14:20</text>
<text class="ax" x="1562.4" y="501.3" text-anchor="middle">14:25</text>
<g fill="#79c96e">
<circle cx="1108.5" cy="477.5" r="2.1"/><circle cx="1115.5" cy="455.5" r="2.1"/><circle cx="1121.5" cy="442.5" r="2.1"/><circle cx="1127.5" cy="430.5" r="2.1"/><circle cx="1134.5" cy="418.5" r="2.1"/><circle cx="1140.5" cy="405.5" r="2.1"/><circle cx="1146.5" cy="394.5" r="2.1"/><circle cx="1152.5" cy="381.5" r="2.1"/><circle cx="1159.5" cy="367.5" r="2.1"/><circle cx="1165.5" cy="361.5" r="2.1"/><circle cx="1171.5" cy="361.5" r="2.1"/><circle cx="1178.5" cy="361.5" r="2.1"/><circle cx="1184.5" cy="361.5" r="2.1"/><circle cx="1190.5" cy="361.5" r="2.1"/><circle cx="1197.5" cy="361.5" r="2.1"/><circle cx="1203.5" cy="361.5" r="2.1"/><circle cx="1209.5" cy="361.5" r="2.1"/><circle cx="1215.5" cy="361.5" r="2.1"/><circle cx="1222.5" cy="361.5" r="2.1"/><circle cx="1228.5" cy="361.5" r="2.1"/><circle cx="1234.5" cy="361.5" r="2.1"/><circle cx="1241.5" cy="361.5" r="2.1"/><circle cx="1247.5" cy="361.5" r="2.1"/><circle cx="1253.5" cy="361.5" r="2.1"/><circle cx="1260.5" cy="361.5" r="2.1"/><circle cx="1266.5" cy="361.5" r="2.1"/><circle cx="1272.5" cy="361.5" r="2.1"/><circle cx="1278.5" cy="361.5" r="2.1"/><circle cx="1285.5" cy="361.5" r="2.1"/><circle cx="1291.5" cy="361.5" r="2.1"/><circle cx="1297.5" cy="361.5" r="2.1"/><circle cx="1304.5" cy="361.5" r="2.1"/><circle cx="1310.5" cy="361.5" r="2.1"/><circle cx="1316.5" cy="361.5" r="2.1"/><circle cx="1323.5" cy="361.5" r="2.1"/><circle cx="1329.5" cy="361.5" r="2.1"/><circle cx="1335.5" cy="361.5" r="2.1"/><circle cx="1341.5" cy="361.5" r="2.1"/><circle cx="1348.5" cy="361.5" r="2.1"/><circle cx="1354.5" cy="361.5" r="2.1"/><circle cx="1360.5" cy="361.5" r="2.1"/><circle cx="1367.5" cy="361.5" r="2.1"/><circle cx="1373.5" cy="361.5" r="2.1"/><circle cx="1379.5" cy="361.5" r="2.1"/><circle cx="1386.5" cy="361.5" r="2.1"/><circle cx="1392.5" cy="361.5" r="2.1"/><circle cx="1398.5" cy="361.5" r="2.1"/><circle cx="1404.5" cy="361.5" r="2.1"/><circle cx="1411.5" cy="361.5" r="2.1"/><circle cx="1417.5" cy="361.5" r="2.1"/><circle cx="1423.5" cy="361.5" r="2.1"/><circle cx="1430.5" cy="361.5" r="2.1"/><circle cx="1436.5" cy="361.5" r="2.1"/><circle cx="1442.5" cy="361.5" r="2.1"/><circle cx="1449.5" cy="361.5" r="2.1"/><circle cx="1455.5" cy="361.5" r="2.1"/><circle cx="1461.5" cy="361.5" r="2.1"/><circle cx="1467.5" cy="361.5" r="2.1"/><circle cx="1474.5" cy="361.5" r="2.1"/><circle cx="1480.5" cy="361.5" r="2.1"/><circle cx="1486.5" cy="361.5" r="2.1"/><circle cx="1493.5" cy="361.5" r="2.1"/><circle cx="1499.5" cy="349.5" r="2.1"/><circle cx="1505.5" cy="336.5" r="2.1"/><circle cx="1512.5" cy="336.5" r="2.1"/><circle cx="1518.5" cy="336.5" r="2.1"/><circle cx="1524.5" cy="336.5" r="2.1"/><circle cx="1530.5" cy="336.5" r="2.1"/><circle cx="1537.5" cy="336.5" r="2.1"/><circle cx="1543.5" cy="336.5" r="2.1"/><circle cx="1549.5" cy="336.5" r="2.1"/><circle cx="1556.5" cy="349.5" r="2.1"/><circle cx="1562.5" cy="361.5" r="2.1"/><circle cx="1568.5" cy="361.5" r="2.1"/><circle cx="1575.5" cy="361.5" r="2.1"/>
</g>
<g fill="#f6d518">
<circle cx="1108.5" cy="484.5" r="2.1"/><circle cx="1115.5" cy="484.5" r="2.1"/><circle cx="1121.5" cy="484.5" r="2.1"/><circle cx="1127.5" cy="484.5" r="2.1"/><circle cx="1134.5" cy="484.5" r="2.1"/><circle cx="1140.5" cy="484.5" r="2.1"/><circle cx="1146.5" cy="484.5" r="2.1"/><circle cx="1152.5" cy="484.5" r="2.1"/><circle cx="1159.5" cy="484.5" r="2.1"/><circle cx="1165.5" cy="484.5" r="2.1"/><circle cx="1171.5" cy="484.5" r="2.1"/><circle cx="1178.5" cy="484.5" r="2.1"/><circle cx="1184.5" cy="484.5" r="2.1"/><circle cx="1190.5" cy="484.5" r="2.1"/><circle cx="1197.5" cy="484.5" r="2.1"/><circle cx="1203.5" cy="484.5" r="2.1"/><circle cx="1209.5" cy="484.5" r="2.1"/><circle cx="1215.5" cy="484.5" r="2.1"/><circle cx="1222.5" cy="484.5" r="2.1"/><circle cx="1228.5" cy="484.5" r="2.1"/><circle cx="1234.5" cy="484.5" r="2.1"/><circle cx="1241.5" cy="484.5" r="2.1"/><circle cx="1247.5" cy="484.5" r="2.1"/><circle cx="1253.5" cy="484.5" r="2.1"/><circle cx="1260.5" cy="484.5" r="2.1"/><circle cx="1266.5" cy="484.5" r="2.1"/><circle cx="1272.5" cy="484.5" r="2.1"/><circle cx="1278.5" cy="484.5" r="2.1"/><circle cx="1285.5" cy="484.5" r="2.1"/><circle cx="1291.5" cy="484.5" r="2.1"/><circle cx="1297.5" cy="484.5" r="2.1"/><circle cx="1304.5" cy="484.5" r="2.1"/><circle cx="1310.5" cy="484.5" r="2.1"/><circle cx="1316.5" cy="484.5" r="2.1"/><circle cx="1323.5" cy="484.5" r="2.1"/><circle cx="1329.5" cy="484.5" r="2.1"/><circle cx="1335.5" cy="484.5" r="2.1"/><circle cx="1341.5" cy="484.5" r="2.1"/><circle cx="1348.5" cy="484.5" r="2.1"/><circle cx="1354.5" cy="484.5" r="2.1"/><circle cx="1360.5" cy="484.5" r="2.1"/><circle cx="1367.5" cy="484.5" r="2.1"/><circle cx="1373.5" cy="484.5" r="2.1"/><circle cx="1379.5" cy="484.5" r="2.1"/><circle cx="1386.5" cy="484.5" r="2.1"/><circle cx="1392.5" cy="484.5" r="2.1"/><circle cx="1398.5" cy="484.5" r="2.1"/><circle cx="1404.5" cy="484.5" r="2.1"/><circle cx="1411.5" cy="484.5" r="2.1"/><circle cx="1417.5" cy="484.5" r="2.1"/><circle cx="1423.5" cy="484.5" r="2.1"/><circle cx="1430.5" cy="484.5" r="2.1"/><circle cx="1436.5" cy="484.5" r="2.1"/><circle cx="1442.5" cy="484.5" r="2.1"/><circle cx="1449.5" cy="484.5" r="2.1"/><circle cx="1455.5" cy="484.5" r="2.1"/><circle cx="1461.5" cy="484.5" r="2.1"/><circle cx="1467.5" cy="484.5" r="2.1"/><circle cx="1474.5" cy="484.5" r="2.1"/><circle cx="1480.5" cy="484.5" r="2.1"/><circle cx="1486.5" cy="484.5" r="2.1"/><circle cx="1493.5" cy="484.5" r="2.1"/><circle cx="1499.5" cy="484.5" r="2.1"/><circle cx="1505.5" cy="484.5" r="2.1"/><circle cx="1512.5" cy="484.5" r="2.1"/><circle cx="1518.5" cy="484.5" r="2.1"/><circle cx="1524.5" cy="484.5" r="2.1"/><circle cx="1530.5" cy="484.5" r="2.1"/><circle cx="1537.5" cy="484.5" r="2.1"/><circle cx="1543.5" cy="484.5" r="2.1"/><circle cx="1549.5" cy="484.5" r="2.1"/><circle cx="1556.5" cy="484.5" r="2.1"/><circle cx="1562.5" cy="484.5" r="2.1"/><circle cx="1568.5" cy="484.5" r="2.1"/><circle cx="1575.5" cy="484.5" r="2.1"/>
</g>
<path d="M125.5 591V789M254.5 591V789M383.5 591V789M512.5 591V789M641.5 591V789M770.5 591V789M899.5 591V789M1028.5 591V789M1158.5 591V789M1287.5 591V789M1416.5 591V789M1545.5 591V789M27 591.5H1580.3M27 623.5H1580.3M27 656.5H1580.3M27 688.5H1580.3M27 721.5H1580.3M27 753.5H1580.3M27 786.5H1580.3" stroke="#f0faff" stroke-opacity="0.075" stroke-width="1" fill="none" shape-rendering="crispEdges"/>
<text class="ax ay" x="23.1" y="788.98" text-anchor="end">0</text>
<text class="ax ay" x="23.1" y="756.5" text-anchor="end">0.1</text>
<text class="ax ay" x="23.1" y="724.02" text-anchor="end">0.2</text>
<text class="ax ay" x="23.1" y="691.54" text-anchor="end">0.3</text>
<text class="ax ay" x="23.1" y="659.06" text-anchor="end">0.4</text>
<text class="ax ay" x="23.1" y="626.58" text-anchor="end">0.5</text>
<text class="ax ay" x="23.1" y="594.1" text-anchor="end">0.6</text>
<text class="ax" x="125" y="802.1" text-anchor="middle">13:30</text>
<text class="ax" x="254.13" y="802.1" text-anchor="middle">13:35</text>
<text class="ax" x="383.26" y="802.1" text-anchor="middle">13:40</text>
<text class="ax" x="512.39" y="802.1" text-anchor="middle">13:45</text>
<text class="ax" x="641.52" y="802.1" text-anchor="middle">13:50</text>
<text class="ax" x="770.65" y="802.1" text-anchor="middle">13:55</text>
<text class="ax" x="899.78" y="802.1" text-anchor="middle">14:00</text>
<text class="ax" x="1028.91" y="802.1" text-anchor="middle">14:05</text>
<text class="ax" x="1158.04" y="802.1" text-anchor="middle">14:10</text>
<text class="ax" x="1287.17" y="802.1" text-anchor="middle">14:15</text>
<text class="ax" x="1416.3" y="802.1" text-anchor="middle">14:20</text>
<text class="ax" x="1545.43" y="802.1" text-anchor="middle">14:25</text>
<rect x="589.87" y="768" width="49.8" height="17.4" fill="#F07118"/>
<rect x="589.87" y="748.56" width="49.8" height="17.4" fill="#9A3206"/>
<rect x="641.52" y="768" width="49.8" height="17.4" fill="#FFF5EB"/>
<rect x="641.52" y="748.56" width="49.8" height="17.4" fill="#EA6515"/>
<rect x="641.52" y="729.12" width="49.8" height="17.4" fill="#CC4B0A"/>
<rect x="641.52" y="709.68" width="49.8" height="17.4" fill="#A33806"/>
<rect x="693.17" y="768" width="49.8" height="17.4" fill="#FFF5EB"/>
<rect x="693.17" y="729.12" width="49.8" height="17.4" fill="#B34007"/>
<rect x="693.17" y="709.68" width="49.8" height="17.4" fill="#B34007"/>
<rect x="693.17" y="690.24" width="49.8" height="17.4" fill="#BA4308"/>
<rect x="693.17" y="670.8" width="49.8" height="17.4" fill="#B34007"/>
<rect x="744.82" y="768" width="49.8" height="17.4" fill="#FFF5EB"/>
<rect x="744.82" y="670.8" width="49.8" height="17.4" fill="#E96414"/>
<rect x="744.82" y="709.68" width="49.8" height="17.4" fill="#E96414"/>
<rect x="796.48" y="768" width="49.8" height="17.4" fill="#FFF5EB"/>
<rect x="796.48" y="670.8" width="49.8" height="17.4" fill="#E96414"/>
<rect x="796.48" y="709.68" width="49.8" height="17.4" fill="#E96414"/>
<rect x="848.13" y="768" width="49.8" height="17.4" fill="#FFF5EB"/>
<rect x="848.13" y="670.8" width="49.8" height="17.4" fill="#E96414"/>
<rect x="848.13" y="709.68" width="49.8" height="17.4" fill="#E96414"/>
<rect x="899.78" y="768" width="49.8" height="17.4" fill="#FFF5EB"/>
<rect x="899.78" y="670.8" width="49.8" height="17.4" fill="#E96414"/>
<rect x="899.78" y="709.68" width="49.8" height="17.4" fill="#E96414"/>
<rect x="951.43" y="768" width="49.8" height="17.4" fill="#FFF5EB"/>
<rect x="951.43" y="670.8" width="49.8" height="17.4" fill="#E96414"/>
<rect x="951.43" y="709.68" width="49.8" height="17.4" fill="#E96414"/>
<rect x="1003.08" y="768" width="49.8" height="17.4" fill="#FFF5EB"/>
<rect x="1003.08" y="670.8" width="49.8" height="17.4" fill="#E96414"/>
<rect x="1003.08" y="709.68" width="49.8" height="17.4" fill="#E96414"/>
<rect x="1054.74" y="768" width="49.8" height="17.4" fill="#FFF5EB"/>
<rect x="1054.74" y="670.8" width="49.8" height="17.4" fill="#E96414"/>
<rect x="1054.74" y="709.68" width="49.8" height="17.4" fill="#E96414"/>
<rect x="1105.79" y="768" width="49.8" height="17.4" fill="#FFF5EB"/>
<rect x="1105.79" y="670.8" width="49.8" height="17.4" fill="#E96414"/>
<rect x="1105.79" y="709.68" width="49.8" height="17.4" fill="#E96414"/>
<rect x="1157.44" y="768" width="49.8" height="17.4" fill="#FFF5EB"/>
<rect x="1157.44" y="670.8" width="49.8" height="17.4" fill="#E96414"/>
<rect x="1157.44" y="709.68" width="49.8" height="17.4" fill="#E96414"/>
<rect x="1209.09" y="768" width="49.8" height="17.4" fill="#FFF5EB"/>
<rect x="1209.09" y="670.8" width="49.8" height="17.4" fill="#E96414"/>
<rect x="1209.09" y="709.68" width="49.8" height="17.4" fill="#E96414"/>
<rect x="1260.74" y="768" width="49.8" height="17.4" fill="#FFF5EB"/>
<rect x="1260.74" y="670.8" width="49.8" height="17.4" fill="#E96414"/>
<rect x="1260.74" y="709.68" width="49.8" height="17.4" fill="#E96414"/>
<rect x="1312.4" y="768" width="49.8" height="17.4" fill="#FFF5EB"/>
<rect x="1312.4" y="670.8" width="49.8" height="17.4" fill="#E96414"/>
<rect x="1312.4" y="709.68" width="49.8" height="17.4" fill="#E96414"/>
<rect x="1364.05" y="768" width="49.8" height="17.4" fill="#FFF5EB"/>
<rect x="1364.05" y="670.8" width="49.8" height="17.4" fill="#E96414"/>
<rect x="1364.05" y="709.68" width="49.8" height="17.4" fill="#E96414"/>
<rect x="1415.7" y="768" width="49.8" height="17.4" fill="#FFF5EB"/>
<rect x="1415.7" y="670.8" width="49.8" height="17.4" fill="#E96414"/>
<rect x="1415.7" y="709.68" width="49.8" height="17.4" fill="#CB4A0A"/>
<rect x="1415.7" y="593.04" width="49.8" height="17.4" fill="#9B3406"/>
<rect x="1467.35" y="768" width="49.8" height="17.4" fill="#FFF5EB"/>
<rect x="1467.35" y="670.8" width="49.8" height="17.4" fill="#E96414"/>
<rect x="1467.35" y="709.68" width="49.8" height="17.4" fill="#CB4A0A"/>
<rect x="1467.35" y="593.04" width="49.8" height="17.4" fill="#9B3406"/>
<rect x="1519" y="768" width="49.8" height="17.4" fill="#FFF5EB"/>
<rect x="1519" y="670.8" width="49.8" height="17.4" fill="#E96414"/>
<rect x="1519" y="709.68" width="49.8" height="17.4" fill="#E96414"/>
<rect x="1519" y="593.04" width="49.8" height="17.4" fill="#862C05"/>
<rect x="1570.2" y="768" width="9.6" height="17.4" fill="#D9530D"/>
<rect x="1570.2" y="709.68" width="9.6" height="17.4" fill="#A33C0D"/>
<rect x="1570.2" y="670.8" width="9.6" height="17.4" fill="#A33C0D"/>
</svg>
<div class="title" style="left:6.7px;top:8.7px;letter-spacing:0.32px">HTTP Request Rate</div>
<div class="title" style="left:807.6px;top:8.7px;letter-spacing:0.57px">95th Percentile Latency</div>
<div class="title" style="left:6.6px;top:280.7px;letter-spacing:0.27px">Error Rate %</div>
<div class="title" style="left:807.7px;top:280.7px;letter-spacing:0.43px">HTTP Status Codes</div>
<div class="title" style="left:6.6px;top:552.7px;letter-spacing:0.54px">Request Duration Distribution</div>
<div class="lg" style="left:29.7px;top:197.9px;letter-spacing:0.35px"><i style="background:#73BF69"></i>GET http</div>
<div class="lg" style="left:103.52px;top:197.9px;letter-spacing:0.35px"><i style="background:#F2CC0C"></i>GET http</div>
<div class="lg" style="left:177.34px;top:197.9px;letter-spacing:0.35px"><i style="background:#5794F2"></i>GET http</div>
<div class="lg" style="left:251.16px;top:197.9px;letter-spacing:0.35px"><i style="background:#FF9830"></i>GET http</div>
<div class="lg" style="left:324.98px;top:197.9px;letter-spacing:0.35px"><i style="background:#F2495C"></i>GET http</div>
<div class="lg" style="left:398.8px;top:197.9px;letter-spacing:0.35px"><i style="background:#B877D9"></i>GET http</div>
<div class="lg" style="left:472.62px;top:197.9px;letter-spacing:0.35px"><i style="background:#37872D"></i>GET http</div>
<div class="lg" style="left:546.44px;top:197.9px;letter-spacing:0.35px"><i style="background:#E0B400"></i>GET http</div>
<div class="lg" style="left:620.26px;top:197.9px;letter-spacing:0.35px"><i style="background:#1F60C4"></i>GET http</div>
<div class="lg" style="left:694.08px;top:197.9px;letter-spacing:0.35px"><i style="background:#FA6400"></i>GET http</div>
<div class="lg" style="left:29.7px;top:218.9px;letter-spacing:0.35px"><i style="background:#C4162A"></i>GET http</div>
<div class="lg" style="left:103.52px;top:218.9px;letter-spacing:0.35px"><i style="background:#8F3BB8"></i>GET http</div>
<div class="lg" style="left:177.34px;top:218.9px;letter-spacing:0.35px"><i style="background:#C8F2C2"></i>GET http</div>
<div class="lg" style="left:251.16px;top:218.9px;letter-spacing:0.35px"><i style="background:#FFF899"></i>GET http</div>
<div class="lg" style="left:324.98px;top:218.9px;letter-spacing:0.35px"><i style="background:#C0D8FF"></i>GET http</div>
<div class="lg" style="left:398.8px;top:218.9px;letter-spacing:0.35px"><i style="background:#FFCB7D"></i>GET http</div>
<div class="lg" style="left:472.62px;top:218.9px;letter-spacing:0.35px"><i style="background:#FFA6B0"></i>GET http</div>
<div class="lg" style="left:546.44px;top:218.9px;letter-spacing:0.35px"><i style="background:#DEB6F2"></i>GET http</div>
<div class="lg" style="left:620.26px;top:218.9px;letter-spacing:0.35px"><i style="background:#447EBC"></i>GET http</div>
<div class="lg" style="left:694.08px;top:218.9px;letter-spacing:0.35px"><i style="background:#C15C17"></i>GET http</div>
<div class="lg" style="left:29.7px;top:239.9px;letter-spacing:0.35px"><i style="background:#890F02"></i>GET http</div>
<div class="lg" style="left:103.52px;top:239.9px;letter-spacing:0.35px"><i style="background:#0A437C"></i>GET http</div>
<div class="lg" style="left:177.34px;top:239.9px;letter-spacing:0.35px"><i style="background:#6D1F62"></i>GET http</div>
<div class="lg" style="left:251.16px;top:239.9px;letter-spacing:0.35px"><i style="background:#584477"></i>GET http</div>
<div class="lg" style="left:324.98px;top:239.9px;letter-spacing:0.35px"><i style="background:#B7DBAB"></i>GET http</div>
<div class="lg" style="left:398.8px;top:239.9px;letter-spacing:0.35px"><i style="background:#F4D598"></i>GET http</div>
<div class="lg" style="left:472.62px;top:239.9px;letter-spacing:0.35px"><i style="background:#70DBED"></i>GET http</div>
<div class="lg" style="left:546.44px;top:239.9px;letter-spacing:0.35px"><i style="background:#F9BA8F"></i>GET http</div>
<div class="clip" style="left:800px;top:186px;width:780px;height:73.6px">
<div class="lg" style="left:30.7px;top:4.9px;letter-spacing:0.58px"><i style="background:#73BF69"></i>95th percentile</div>
<div class="lg" style="left:137.78px;top:4.9px;letter-spacing:0.58px"><i style="background:#F2CC0C"></i>95th percentile</div>
<div class="lg" style="left:244.86px;top:4.9px;letter-spacing:0.58px"><i style="background:#5794F2"></i>95th percentile</div>
<div class="lg" style="left:351.94px;top:4.9px;letter-spacing:0.58px"><i style="background:#FF9830"></i>95th percentile</div>
<div class="lg" style="left:459.02px;top:4.9px;letter-spacing:0.58px"><i style="background:#F2495C"></i>95th percentile</div>
<div class="lg" style="left:566.1px;top:4.9px;letter-spacing:0.58px"><i style="background:#B877D9"></i>95th percentile</div>
<div class="lg" style="left:673.18px;top:4.9px;letter-spacing:0.58px"><i style="background:#37872D"></i>95th percentile</div>
<div class="lg" style="left:30.7px;top:25.9px;letter-spacing:0.58px"><i style="background:#E0B400"></i>95th percentile</div>
<div class="lg" style="left:137.78px;top:25.9px;letter-spacing:0.58px"><i style="background:#1F60C4"></i>95th percentile</div>
<div class="lg" style="left:244.86px;top:25.9px;letter-spacing:0.58px"><i style="background:#FA6400"></i>95th percentile</div>
<div class="lg" style="left:351.94px;top:25.9px;letter-spacing:0.58px"><i style="background:#C4162A"></i>95th percentile</div>
<div class="lg" style="left:459.02px;top:25.9px;letter-spacing:0.58px"><i style="background:#8F3BB8"></i>95th percentile</div>
<div class="lg" style="left:566.1px;top:25.9px;letter-spacing:0.58px"><i style="background:#C8F2C2"></i>95th percentile</div>
<div class="lg" style="left:673.18px;top:25.9px;letter-spacing:0.58px"><i style="background:#FFF899"></i>95th percentile</div>
<div class="lg" style="left:30.7px;top:46.9px;letter-spacing:0.58px"><i style="background:#C0D8FF"></i>95th percentile</div>
<div class="lg" style="left:137.78px;top:46.9px;letter-spacing:0.58px"><i style="background:#FFCB7D"></i>95th percentile</div>
<div class="lg" style="left:244.86px;top:46.9px;letter-spacing:0.58px"><i style="background:#FFA6B0"></i>95th percentile</div>
<div class="lg" style="left:351.94px;top:46.9px;letter-spacing:0.58px"><i style="background:#DEB6F2"></i>95th percentile</div>
<div class="lg" style="left:459.02px;top:46.9px;letter-spacing:0.58px"><i style="background:#447EBC"></i>95th percentile</div>
<div class="lg" style="left:566.1px;top:46.9px;letter-spacing:0.58px"><i style="background:#C15C17"></i>95th percentile</div>
<div class="lg" style="left:673.18px;top:46.9px;letter-spacing:0.58px"><i style="background:#890F02"></i>95th percentile</div>
<div class="lg" style="left:30.7px;top:67.9px;letter-spacing:0.58px"><i style="background:#0A437C"></i>95th percentile</div>
<div class="lg" style="left:137.78px;top:67.9px;letter-spacing:0.58px"><i style="background:#6D1F62"></i>95th percentile</div>
<div class="lg" style="left:244.86px;top:67.9px;letter-spacing:0.58px"><i style="background:#584477"></i>95th percentile</div>
<div class="lg" style="left:351.94px;top:67.9px;letter-spacing:0.58px"><i style="background:#B7DBAB"></i>95th percentile</div>
<div class="lg" style="left:459.02px;top:67.9px;letter-spacing:0.58px"><i style="background:#F4D598"></i>95th percentile</div>
<div class="lg" style="left:566.1px;top:67.9px;letter-spacing:0.58px"><i style="background:#70DBED"></i>95th percentile</div>
<div class="lg" style="left:673.18px;top:67.9px;letter-spacing:0.58px"><i style="background:#F9BA8F"></i>95th percentile</div>
</div>
<div style="position:absolute;left:1581px;top:185px;width:3px;height:59px;background:#77787d;border-radius:1.5px"></div>
<div class="lg" style="left:29.7px;top:512px;letter-spacing:0.42px"><i style="background:#73BF69"></i>Error rate %</div>
<div class="lg" style="left:830.8px;top:512px;letter-spacing:0.5px"><i style="background:#73BF69"></i>Status 200</div>
<div class="lg" style="left:915.9px;top:512px;letter-spacing:0.5px"><i style="background:#F2CC0C"></i>Status 500</div>
</div>
</body></html>
